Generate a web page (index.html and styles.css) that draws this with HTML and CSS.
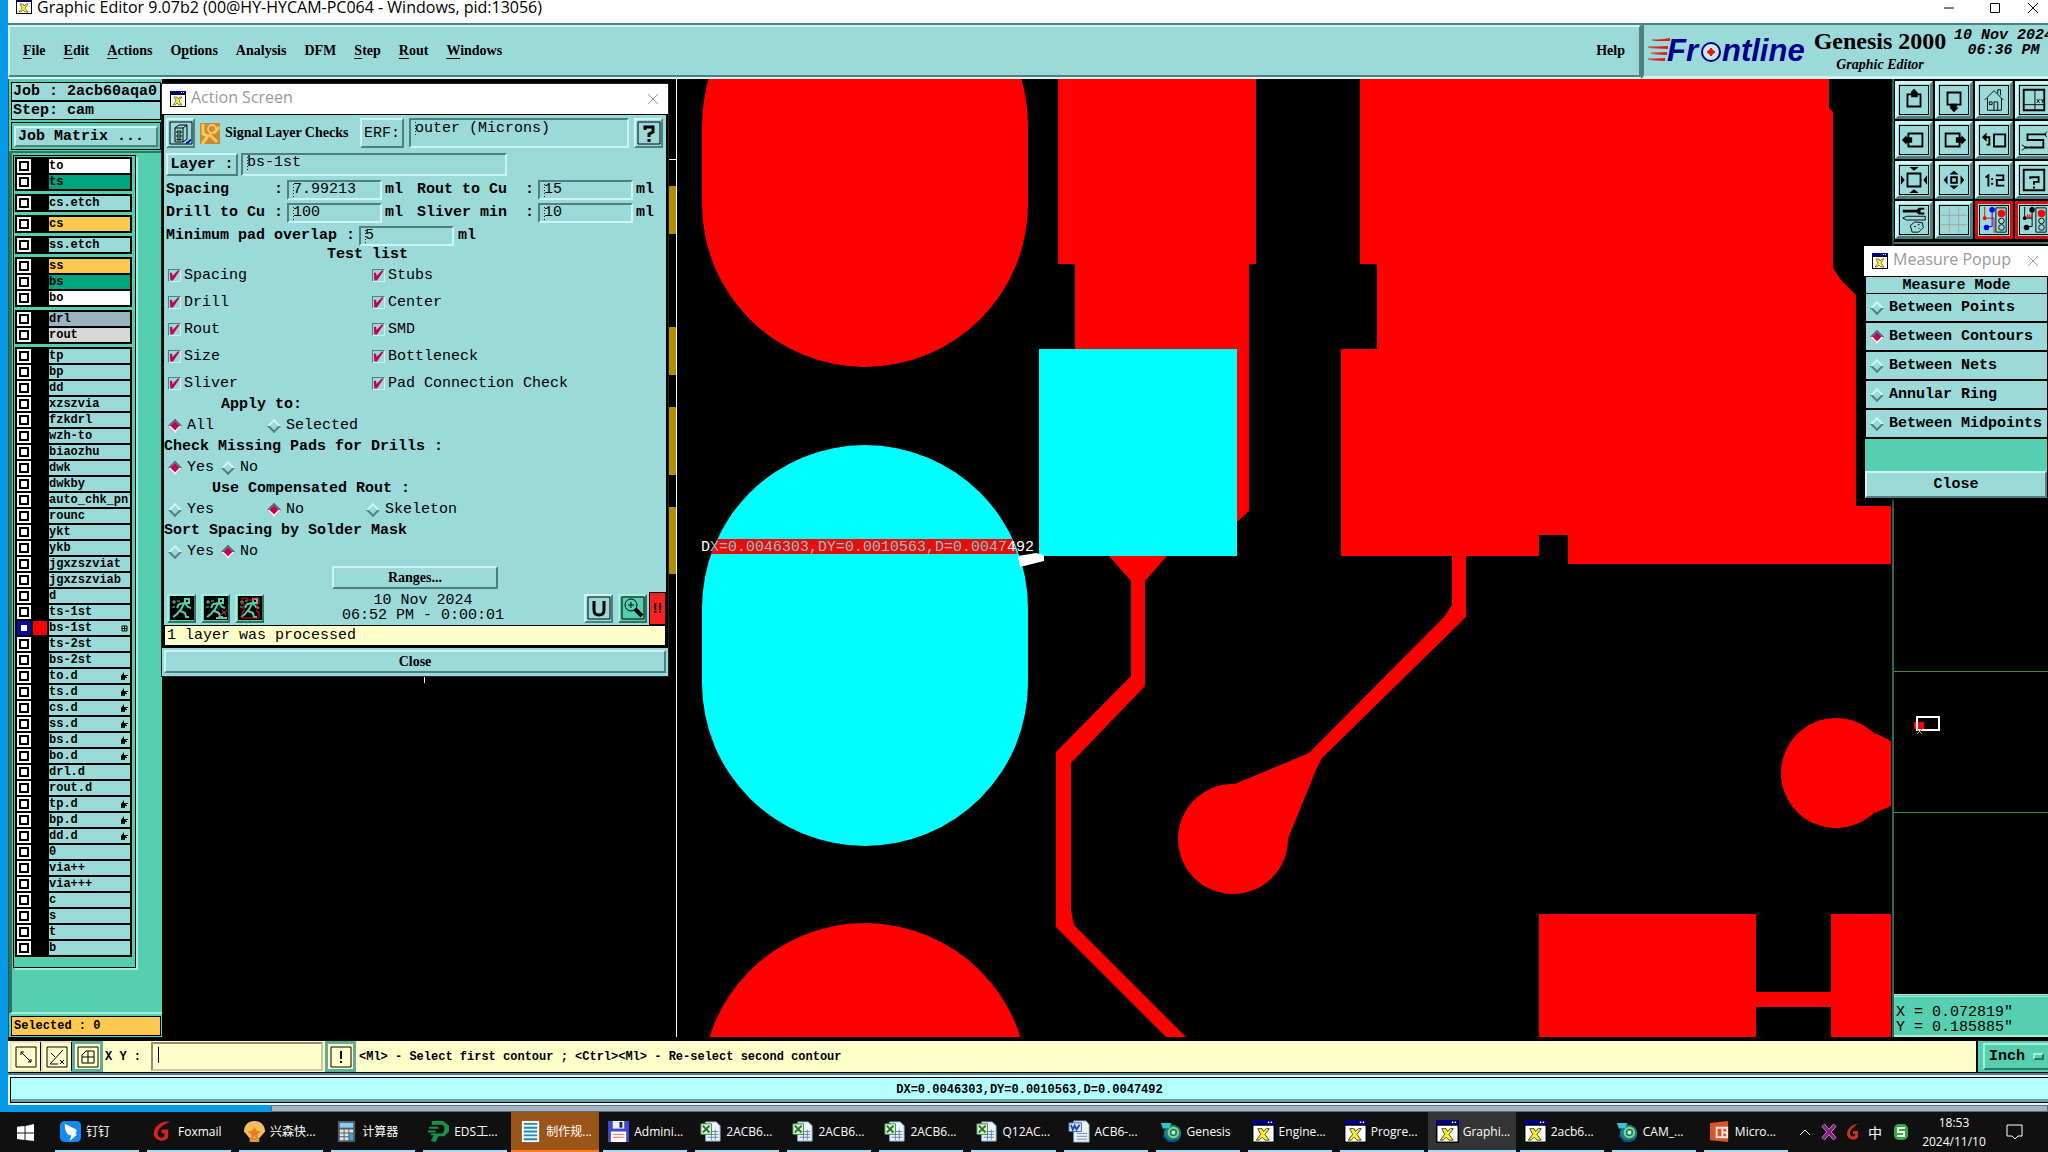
FILE: index.html
```
<!DOCTYPE html>
<html lang="en">
<head>
    <meta charset="utf-8">
    <title>Graphic Editor 9.07b2</title>
    <meta name="viewport" content="width=device-width, initial-scale=1.0">
    <link rel="stylesheet" href="styles.css">
</head>
<body>
    <!-- shared icons -->
    <svg class="defs" width="0" height="0">
        <symbol id="xwin" viewBox="0 0 16 16">
            <path d="M0 0h16v16H0z" fill="#000"/>
            <path d="M1 4h14v11H1z" fill="#fff"/>
            <path d="M0 0h16v3H0z" fill="#000080"/>
            <path d="M11 1h1v1h-1zM13 1h1v1h-1z" fill="#fff"/>
            <path d="M4 6h3l1 2 2-2h2L9 10l3 4H9l-2-2-2 2H3l3-4z" fill="#ffee22" stroke="#333" stroke-width=".6"/>
        </symbol>
        <symbol id="close" viewBox="0 0 12 12">
            <path d="M1 1l10 10M11 1L1 11" fill="none" stroke="currentColor"/>
        </symbol>
        <symbol id="excel" viewBox="0 0 24 24">
            <path d="M7 2h11l4 4v16H7z" fill="#eef4fb" stroke="#8fa9c8"/>
            <path d="M9 12h11M9 15h11M9 18h11M13 10v11M17 10v11" stroke="#5d86c0"/>
            <path d="M2 4h11v11H2z" fill="#e8f5e4" stroke="#3d8c3a"/>
            <path d="M4 6l7 7M11 6l-7 7" stroke="#1f7d28" stroke-width="2"/>
        </symbol>
        <symbol id="genesis" viewBox="0 0 24 24">
            <circle cx="13" cy="14" r="9" fill="#17808f"/>
            <path d="M1 3h11l-2 5-7 1z" fill="#35c0cc"/>
            <circle cx="14" cy="13" r="5" fill="none" stroke="#8edb6c" stroke-width="2"/>
            <circle cx="14" cy="13" r="2" fill="#ecf5a0"/>
            <path d="M3 16l6 6 10-1" fill="none" stroke="#0c4b80" stroke-width="2"/>
        </symbol>
        <symbol id="runner" viewBox="0 0 24 24">
            <path d="M0 0h24v24H0z" fill="#000"/>
            <path d="M15 3h4v4h-4zM9 8l6-1 3 4 3 1M14 8l-4 7 5 2 1 4h3M10 14l-3 4-4 3M9 8l-2 4" fill="none" stroke="#55cfb0" stroke-width="2"/>
            <path d="M2 6h4M4 4v4M7 5h3M2 11h3" stroke="#55cfb0"/>
        </symbol>
    </svg>

    <div class="window">
        <header class="titlebar">
            <svg class="winicon"><use href="#xwin"/></svg>
            <span class="wintitle">Graphic Editor 9.07b2 (00@HY-HYCAM-PC064 - Windows, pid:13056)</span>
            <button class="winbtn" aria-label="Minimize"><svg viewBox="0 0 12 12"><path d="M1 6h10" stroke="#000"/></svg></button>
            <button class="winbtn" aria-label="Maximize"><svg viewBox="0 0 12 12"><path d="M1.500 1.500h9v9h-9z" fill="none" stroke="#000"/></svg></button>
            <button class="winbtn" aria-label="Close"><svg><use href="#close"/></svg></button>
        </header>

        <div class="top">
            <nav class="menu">
                <a href="#"><u>F</u>ile</a>
                <a href="#"><u>E</u>dit</a>
                <a href="#"><u>A</u>ctions</a>
                <a href="#">O<u>p</u>tions</a>
                <a href="#">Analysis</a>
                <a href="#">DFM</a>
                <a href="#"><u>S</u>tep</a>
                <a href="#"><u>R</u>out</a>
                <a href="#"><u>W</u>indows</a>
                <a href="#" class="help">Help</a>
            </nav>
            <div class="brand">
                <svg class="logo" viewBox="0 0 162 34">
                    <path d="M4 7l18-3v3zM0 14l20-2v3zM3 20l16-2v3zM0 26l17-2v3z" fill="#e01818"/>
                    <path d="M4 6h16M0 13h18M3 19h14M0 25h14" stroke="#e01818"/>
                    <g class="logotext">
                        <text x="19" y="27">Fr</text>
                        <text x="74" y="27">ntline</text>
                    </g>
                    <circle cx="63" cy="18" r="9" fill="#c9ecec" stroke="#00008b" stroke-width="2"/>
                    <path d="M63 14v8M59 18h8" stroke="#e01818" stroke-width="2"/>
                    <circle cx="63" cy="18" r="3" fill="#e01818"/>
                </svg>
                <div class="product"><b>Genesis 2000</b><i>Graphic Editor</i></div>
                <div class="date"><span>10 Nov 2024</span><span>06:36 PM</span></div>
            </div>
        </div>

        <main class="main">
            <aside class="sidebar">
                <div class="jobbox">Job : 2acb60aqa0</div>
                <div class="jobbox">Step: cam</div>
                <div class="matrix"><button class="bevel">Job Matrix ...</button></div>
                <div class="layerarea">
                    <div id="layers" class="layers"></div>
                </div>
                <div class="selected">Selected : 0</div>
            </aside>

            <section class="canvas">
                <svg class="board" viewBox="162 79 1730 958" preserveAspectRatio="xMinYMin slice">
                    <!-- ruler -->
                    <g fill="#b08c00">
                        <path d="M660 186h16v48h-16zM660 327h16v48h-16zM660 407h16v68h-16zM660 507h16v67h-16z"/>
                    </g>
                    <path d="M676.500 79v958M660 159.500h16M424.500 670v13" stroke="#fff"/>
                    <g fill="#f00">
                        <rect x="702" y="-38" width="326" height="405" rx="163"/>
                        <rect x="702" y="923" width="326" height="405" rx="163"/>
                        <path d="M1058 79h198v185h-7v247l-12 11h-40V349h-122v-85h-17z"/>
                        <path d="M1360 79h469v29l4 4v156l8 12 15 15v211h35v58h-323v-29h-29v21h-198V349h36v-85h-17z"/>
                        <path d="M1109 556h58l-22 25v105l-74 77v147l3 15 112 112h-20L1056 927V752l75-76v-95z"/>
                        <path d="M1452 556h14v61l-144 141-6 12-28 69-48 0-5-55 74-31 135-136 8-12z"/>
                        <circle cx="1233" cy="839" r="55"/>
                        <circle cx="1836" cy="773" r="55"/>
                        <path d="M1875 733l16 8v65l-16 7z"/>
                        <path d="M1539 914h217v78h75v-78h60v123h-60v-30h-75v30h-217z"/>
                    </g>
                    <g fill="#0ff">
                        <rect x="702" y="445" width="326" height="401" rx="163"/>
                        <path d="M1039 349h198v207h-198z"/>
                    </g>
                    <path d="M717 539h295l5 15H711z" fill="#ee0b0b"/>
                    <path d="M1018 556l18-3 8 2v6l-24 6z" fill="#fff"/>
                    <text class="measure" x="701" y="551"><tspan class="out">D</tspan>X=0.0046303,DY=0.0010563,D=0.0047<tspan class="out">492</tspan></text>
                </svg>
            </section>

            <aside class="right">
                <div class="tools">
                    <button aria-label="Pan up"><svg viewBox="0 0 30 30"><path d="M8 9h14v13H8z" class="o"/><path d="M11 7l4-4 4 4v5h-7V7z"/></svg></button>
                    <button aria-label="Pan down"><svg viewBox="0 0 30 30"><path d="M8 7h14v13H8z" class="o"/><path d="M11 19h7v4h2l-5 5-5-5h1z"/></svg></button>
                    <button aria-label="Home"><svg viewBox="0 0 30 30"><path d="M5 15L15 5l10 10M8 13v13h15V13M15 26v-9h4v9M10 17h3v3h-3zM19 8V4h3v6" class="t"/></svg></button>
                    <button aria-label="Split view"><svg viewBox="0 0 30 30"><path d="M4 4h22v22H4z" class="o"/><path d="M16 4v22M4 20h22M18 14l3 4M21 14l-3 4M22 14l2 2 1-2M24 16v2" class="t"/></svg></button>
                    <button aria-label="Pan left"><svg viewBox="0 0 30 30"><path d="M9 8h15v14H9z" class="o"/><path d="M2 15l5-5v2h6v6H7v2z"/></svg></button>
                    <button aria-label="Pan right"><svg viewBox="0 0 30 30"><path d="M6 8h15v14H6z" class="o"/><path d="M28 15l-5-5v2h-6v6h6v2z"/></svg></button>
                    <button aria-label="Previous view"><svg viewBox="0 0 30 30"><path d="M15 9h12v13H15zM4 12h6v8H7" class="o"/><path d="M2 12l5-5v10z"/></svg></button>
                    <button aria-label="Serpentine"><svg viewBox="0 0 30 30"><path d="M28 9H8v6h17v8H5" class="o"/><path d="M2 20l4 3-4 3M29 6l-3 3 3 3" class="t"/></svg></button>
                    <button aria-label="Zoom in"><svg viewBox="0 0 30 30"><path d="M8 8h14v14H8z" class="o"/><path d="M10 1h10l-5 4zM10 29h10l-5-4zM1 10v10l4-5zM29 10v10l-4-5z"/></svg></button>
                    <button aria-label="Zoom out"><svg viewBox="0 0 30 30"><path d="M12 12h6v6h-6z" class="o"/><path d="M10 9l5-4 5 4zM10 21l5 4 5-4zM8 10v10l-4-5zM22 10v10l4-5z"/></svg></button>
                    <button aria-label="Scale 1:2"><svg viewBox="0 0 30 30"><path d="M6 12l3-2v12M13 13v2M13 18v2M17 10h8v5h-7v6h8" class="o"/></svg></button>
                    <button aria-label="Query"><svg viewBox="0 0 30 30"><path d="M4 4h22v22H4z" class="o"/><path d="M11 14v-2h9v5h-5v3M15 22v2" class="o"/></svg></button>
                    <button aria-label="Settings"><svg viewBox="0 0 30 30"><path d="M3 4h15l2-2h6v2h-4v3h4v2h-6l-2-2H3z"/><path d="M3 13l4-2h20v4H7zM11 21l5-4 8 1 1 5-5 5h-7zM15 22h2M19 20h2M20 24h1" class="t"/></svg></button>
                    <button aria-label="Grid"><svg viewBox="0 0 30 30"><path d="M10 1v28M20 1v28M1 10h28M1 20h28" stroke="#b79a9a" fill="none"/></svg></button>
                    <button class="hot" aria-label="Net check"><svg viewBox="0 0 30 30"><path d="M5 1v12h10v16" stroke="#f00" fill="none"/><path d="M13 4v18H7" stroke="#00f" fill="none"/><circle cx="5" cy="13" r="2" fill="#f00"/><circle cx="13" cy="4" r="3" fill="#00f"/><circle cx="7" cy="23" r="3" fill="#00f"/><path d="M17 2h11v26H17z" class="t"/><circle cx="23" cy="8" r="4" fill="#f00"/><circle cx="23" cy="16" r="3" class="t"/><circle cx="23" cy="23" r="3" class="t"/></svg></button>
                    <button class="hot" aria-label="Drill check"><svg viewBox="0 0 30 30"><path d="M5 1v12h8M13 4v18H7" class="t"/><path d="M7 12h6M8 9v3M10 9v3M12 9v3" stroke="#f00"/><circle cx="5" cy="13" r="2"/><circle cx="13" cy="4" r="3"/><circle cx="7" cy="23" r="3"/><path d="M17 2h11v26H17z" class="t"/><circle cx="23" cy="8" r="4" fill="#f00"/><circle cx="23" cy="16" r="3" class="t"/><circle cx="23" cy="23" r="3" class="t"/></svg></button>
                </div>
                <svg class="overview" viewBox="0 0 154 750" preserveAspectRatio="xMinYMin slice">
                    <path d="M0 427.500h160M0 568.500h160" stroke="#4c8a2c"/>
                    <path d="M20 478h10v7H20z" fill="#f00"/>
                    <path d="M23 473h22v13H23z" fill="none" stroke="#fff" stroke-width="2"/>
                    <path d="M23 485l5 5M28 485l-5 5" stroke="#aaa"/>
                </svg>
                <div class="coords">X = 0.072819"<br>Y = 0.185885"</div>
            </aside>

            <section class="dialog action">
                <div class="dlgtitle">
                    <svg class="winicon"><use href="#xwin"/></svg>
                    <span>Action Screen</span>
                    <button class="dlgclose" aria-label="Close window"><svg><use href="#close"/></svg></button>
                </div>
                <form class="dlgbody">
                    <div class="row head">
                        <button type="button" class="bevel sq" aria-label="Checklist"><svg viewBox="0 0 24 24"><path d="M1 1h22v22H1z" class="t"/><path d="M6 7l4-3h8v14l-4 3H6zM6 7h8v14M14 7l4-3M8 10h4v2H8zM8 14h4v2H8zM8 18h4v1H8z" class="t"/><path d="M17 22c3 0 3-3 5-3" fill="none" stroke="#00c" stroke-width="2"/></svg></button>
                        <svg class="checkicon" viewBox="0 0 20 21"><path d="M0 0h20v21H0z" fill="#c58a3d"/><circle cx="12" cy="6" r="4" fill="#c58a3d" stroke="#ffc850" stroke-width="2"/><path d="M3 1v10l5 2-6 8M9 11l8 8M14 10l5-6" stroke="#ffc850" stroke-width="3" fill="none"/></svg>
                        <b class="serif">Signal Layer Checks</b>
                        <button type="button" class="bevel erf">ERF:</button>
                        <input class="field grow" aria-label="ERF" value="outer (Microns)">
                        <button type="button" class="bevel sq" aria-label="Help on checks"><svg viewBox="0 0 24 24"><path d="M1 1h22v22H1z" class="t"/><path d="M8 9V6h8v5l-4 2v3M12 18v3" fill="none" stroke="#000" stroke-width="3"/></svg></button>
                    </div>
                    <div class="row layer">
                        <button type="button" class="bevel">Layer :</button>
                        <input class="field" aria-label="Layer" value="bs-1st">
                    </div>
                    <div class="params">
                        <label for="spacing">Spacing&nbsp;&nbsp;&nbsp;&nbsp;&nbsp;:</label><input id="spacing" class="field" value="7.99213"><span>ml</span>
                        <label for="rout">Rout to Cu&nbsp; :</label><input id="rout" class="field" value="15"><span>ml</span>
                        <label for="drill">Drill to Cu :</label><input id="drill" class="field" value="100"><span>ml</span>
                        <label for="sliver">Sliver min&nbsp; :</label><input id="sliver" class="field" value="10"><span>ml</span>
                    </div>
                    <div class="row overlap">
                        <label for="overlap">Minimum pad overlap :</label><input id="overlap" class="field" value="5"><span>ml</span>
                    </div>
                    <h3 class="testlist">Test list</h3>
                    <div class="tests">
                        <label><input type="checkbox" checked>Spacing</label>
                        <label><input type="checkbox" checked>Stubs</label>
                        <label><input type="checkbox" checked>Drill</label>
                        <label><input type="checkbox" checked>Center</label>
                        <label><input type="checkbox" checked>Rout</label>
                        <label><input type="checkbox" checked>SMD</label>
                        <label><input type="checkbox" checked>Size</label>
                        <label><input type="checkbox" checked>Bottleneck</label>
                        <label><input type="checkbox" checked>Sliver</label>
                        <label><input type="checkbox" checked>Pad Connection Check</label>
                    </div>
                    <h3 class="indent2">Apply to:</h3>
                    <div class="radios wide">
                        <label><input type="radio" name="apply" checked>All</label>
                        <label><input type="radio" name="apply">Selected</label>
                    </div>
                    <h3>Check Missing Pads for Drills :</h3>
                    <div class="radios">
                        <label><input type="radio" name="missing" checked>Yes</label>
                        <label><input type="radio" name="missing">No</label>
                    </div>
                    <h3 class="indent1">Use Compensated Rout :</h3>
                    <div class="radios wide">
                        <label><input type="radio" name="comp">Yes</label>
                        <label><input type="radio" name="comp" checked>No</label>
                        <label><input type="radio" name="comp">Skeleton</label>
                    </div>
                    <h3>Sort Spacing by Solder Mask</h3>
                    <div class="radios">
                        <label><input type="radio" name="sort">Yes</label>
                        <label><input type="radio" name="sort" checked>No</label>
                    </div>
                    <button type="button" class="bevel ranges serif">Ranges...</button>
                    <div class="runbar">
                        <button type="button" class="bevel green" aria-label="Run"><svg><use href="#runner"/></svg></button>
                        <button type="button" class="bevel green" aria-label="Run on area"><svg viewBox="0 0 24 24"><use href="#runner" width="24" height="24"/><path d="M12 22h11" stroke="#55cfb0" stroke-width="2"/><path d="M14 21l9-7M18 14l4 5" stroke="#e33"/></svg></button>
                        <button type="button" class="bevel green" aria-label="Run on profile"><svg viewBox="0 0 24 24"><use href="#runner" width="24" height="24"/><path d="M4 2h5v2h7V2h5v6h-2v8h2v6H4v-6h2V8H4z" fill="none" stroke="#e11"/></svg></button>
                        <div class="rundate">10 Nov 2024<br>06:52 PM - 0:00:01</div>
                        <button type="button" class="bevel" aria-label="Undo"><svg viewBox="0 0 24 24"><path d="M1 1h22v22H1z" class="t"/><path d="M7 5v9q0 5 5 5t5-5V5" fill="none" stroke="#000" stroke-width="3"/></svg></button>
                        <button type="button" class="bevel green" aria-label="View results"><svg viewBox="0 0 24 24"><path d="M1 1h22v22H1z" class="t"/><circle cx="10" cy="9" r="6" class="t"/><path d="M7 9h6M10 6v6" class="t"/><path d="M14 13l7 7" stroke="#000" stroke-width="4"/></svg></button>
                        <button type="button" class="alert">!!</button>
                    </div>
                    <div class="message">1 layer was processed</div>
                </form>
                <div class="dlgfoot"><button class="bevel serif">Close</button></div>
            </section>

            <section class="dialog popup">
                <div class="dlgtitle">
                    <svg class="winicon"><use href="#xwin"/></svg>
                    <span>Measure Popup</span>
                    <button class="dlgclose" aria-label="Close popup"><svg><use href="#close"/></svg></button>
                </div>
                <div class="modes">
                    <h3>Measure Mode</h3>
                    <label><input type="radio" name="mode">Between Points</label>
                    <label><input type="radio" name="mode" checked>Between Contours</label>
                    <label><input type="radio" name="mode">Between Nets</label>
                    <label><input type="radio" name="mode">Annular Ring</label>
                    <label><input type="radio" name="mode">Between Midpoints</label>
                </div>
                <div class="popfoot"><button class="bevel">Close</button></div>
            </section>
        </main>

        <div class="prompt">
            <button class="pbtn" aria-label="Snap"><svg viewBox="0 0 24 24"><path d="M2 2h20v20H2zM7 7l10 10M7 10V7h3M17 14v3h-3" class="t"/></svg></button>
            <button class="pbtn" aria-label="Angle"><svg viewBox="0 0 24 24"><path d="M2 2h20v20H2zM5 19L18 5M6 8l4 4M5 19h8M15 15l4 4M19 15l-4 4" class="t"/></svg></button>
            <button class="pbtn on" aria-label="Grid snap"><svg viewBox="0 0 24 24"><path d="M2 2h20v20H2zM6 18V10l4-4h8v12zM12 6v12M6 12h12" class="t"/></svg></button>
            <label for="xy">X Y :</label>
            <input id="xy" class="field">
            <button class="pbtn on" aria-label="Notes"><svg viewBox="0 0 24 24"><path d="M2 2h20v20H2z" class="t"/><path d="M12 6v8M12 16v2" class="o"/></svg></button>
            <span class="hint">&lt;Ml&gt; - Select first contour ; &lt;Ctrl&gt;&lt;Ml&gt; - Re-select second contour</span>
            <div class="units"><button class="bevel green">Inch <i></i></button></div>
        </div>
        <div class="status"><span>DX=0.0046303,DY=0.0010563,D=0.0047492</span></div>
    </div>
    <div class="behind"></div>

    <footer class="taskbar">
        <button class="start" aria-label="Start"><svg viewBox="0 0 18 18"><path d="M0 3l8-1v7H0zM9 2l9-2v9H9zM0 10h8v7l-8-1zM9 10h9v8l-9-1z" fill="#fff"/></svg></button>
        <div class="tasks">
            <button><svg viewBox="0 0 24 24"><rect x="1" y="1" width="22" height="22" rx="5" fill="#1789f5"/><path d="M6 4l12 6c1 1 0 3-1 5h2l-8 7 2-6h-2c-4-2-5-7-5-12z" fill="#fff"/></svg>钉钉</button>
            <button><svg viewBox="0 0 24 24"><path d="M20 2C10 0 2 8 3 15s12 9 15 3V10h-7v4h3v3c-3 3-7 1-7-3 0-5 6-10 13-12z" fill="#d4231f"/></svg>Foxmail</button>
            <button><svg viewBox="0 0 24 24"><path d="M12 1c7 0 11 5 11 11l-6 7H7l-6-7C1 6 5 1 12 1z" fill="#f4bd62"/><path d="M12 7l2 4 5 1-4 3 1 5-4-3-4 3 1-5-4-3 5-1z" fill="#ee7d1c"/><path d="M7 19h10v4H7z" fill="#e0973c"/></svg>兴森快...</button>
            <button><svg viewBox="0 0 24 24"><path d="M3 1h18v22H3z" fill="#555b63"/><path d="M5 3h14v5H5z" fill="#7fd0f7"/><path d="M5 10h4v3H5zM10 10h4v3h-4zM15 10h4v3h-4zM5 14h4v3H5zM10 14h4v3h-4zM5 18h4v3H5zM10 18h4v3h-4z" fill="#dfe5ea"/><path d="M15 14h4v7h-4z" fill="#3aa0e8"/></svg>计算器</button>
            <button><svg viewBox="0 0 24 24"><path d="M5 1h12l6 5v6l-5 5h-6l-3 6-5-1 4-8h8l2-3V7l-2-2H5z" fill="#159447"/><path d="M2 8h10M1 12h8M4 15h5" stroke="#159447" stroke-width="2"/></svg>EDS工...</button>
            <button class="flash"><svg viewBox="0 0 24 24"><path d="M3 1h18v22H3z" fill="#f5fafd"/><path d="M5 4h14M5 8h14M5 12h14M5 16h14M5 20h14" stroke="#1c8bbd" stroke-width="2"/></svg>制作规...</button>
            <button><svg viewBox="0 0 24 24"><path d="M1 1h22v22H1z" fill="#3d49c8"/><path d="M6 1h12v8H6z" fill="#eef"/><path d="M13 2h3v6h-3z" fill="#224"/><path d="M4 12h16v11H4z" fill="#fff"/><path d="M6 15h12M6 18h12" stroke="#e66"/></svg>Admini...</button>
            <button><svg><use href="#excel"/></svg>2ACB6...</button>
            <button><svg><use href="#excel"/></svg>2ACB6...</button>
            <button><svg><use href="#excel"/></svg>2ACB6...</button>
            <button><svg><use href="#excel"/></svg>Q12AC...</button>
            <button><svg viewBox="0 0 24 24"><path d="M6 1h13l3 4v18H6z" fill="#eef4fb" stroke="#8fa9c8"/><path d="M9 14h11M9 17h11M9 20h11" stroke="#5d86c0"/><path d="M1 3h13v9H1z" fill="#dbe7fa" stroke="#3b66b5"/><path d="M3 5l2 5 2-4 2 4 3-5" fill="none" stroke="#2450a8" stroke-width="2"/></svg>ACB6-...</button>
            <button><svg><use href="#genesis"/></svg>Genesis</button>
            <button><svg><use href="#xwin"/></svg>Engine...</button>
            <button><svg><use href="#xwin"/></svg>Progre...</button>
            <button class="current"><svg><use href="#xwin"/></svg>Graphi...</button>
            <button><svg><use href="#xwin"/></svg>2acb6...</button>
            <button><svg><use href="#genesis"/></svg>CAM_...</button>
            <button><svg viewBox="0 0 24 24"><path d="M2 3l19-2v22L2 21z" fill="#d9532c"/><path d="M8 7h13v12H8z" fill="#fbe9e2"/><path d="M10 9h4v8h-4zM16 9h3v3h-3zM16 14h3v3h-3z" fill="#d9532c"/></svg>Micro...</button>
        </div>
        <div class="tray">
            <svg viewBox="0 0 18 18"><path d="M4 12l5-5 5 5" fill="none" stroke="#fff"/></svg>
            <svg viewBox="0 0 18 18"><path d="M3 2l12 14M15 2L3 16" stroke="#ddd" stroke-width="4"/><path d="M3 2l12 14M15 2L3 16" stroke="#8a1a8a" stroke-width="3"/></svg>
            <svg viewBox="0 0 18 18"><path d="M14 1C8 1 3 6 3 11s8 8 11 3V8H9v3h2v2c-3 1-5 0-5-3 0-3 4-7 8-9z" fill="#d0311c"/></svg>
            <span class="ime">中</span>
            <svg viewBox="0 0 18 18"><rect x="2" y="1" width="14" height="16" rx="5" fill="#2fae3c"/><path d="M13 5H6v4h6v4H5" fill="none" stroke="#fff" stroke-width="2"/></svg>
        </div>
        <div class="clock">18:53<br>2024/11/10</div>
        <button class="notify" aria-label="Notifications"><svg viewBox="0 0 18 18"><path d="M1 2h15v11h-4l-3 3-3-3H1z" fill="none" stroke="#fff"/></svg></button>
    </footer>

    <script>
        const groups = [
            [['to', 'white'], ['ts', 'solder']],
            [['cs.etch', '']],
            [['cs', 'copper']],
            [['ss.etch', '']],
            [['ss', 'copper'], ['bs', 'solder'], ['bo', 'white']],
            [['drl', 'drill'], ['rout', 'rout']],
            ['tp', 'bp', 'dd', 'xzszvia', 'fzkdrl', 'wzh-to', 'biaozhu', 'dwk', 'dwkby',
             'auto_chk_pnl', 'rounc', 'ykt', 'ykb', 'jgxzszviat', 'jgxzszviab', 'd', 'ts-1st',
             'bs-1st', 'ts-2st', 'bs-2st', 'to.d', 'ts.d', 'cs.d', 'ss.d', 'bs.d', 'bo.d',
             'drl.d', 'rout.d', 'tp.d', 'bp.d', 'dd.d', '0', 'via++', 'via+++', 'c', 's', 't', 'b'
            ].map(name => [name, ''])
        ];
        const noHand = ['drl.d', 'rout.d'];
        const hand = '<svg class="mark" viewBox="0 0 8 8"><path d="M1 4l3-4v3h4v1H6v1h1v1H5v2H1z"/></svg>';
        const grid = '<svg class="mark" viewBox="0 0 8 8"><path d="M2 2h5v5H2zM4.500 2v5M2 4.500h5" fill="none" stroke="#000"/></svg>';

        document.getElementById('layers').innerHTML = groups.map(rows =>
            '<div class="group">' + rows.map(([name, kind]) => {
                let mark = '';
                if (name.endsWith('.d') && !noHand.includes(name)) mark = hand;
                if (name === 'bs-1st') mark = grid;
                const active = name === 'bs-1st';
                return `<label class="lrow ${active ? 'active' : ''}">
                    <input type="checkbox" ${active ? 'checked' : ''}>
                    <span class="swatch"></span>
                    <span class="lname ${kind}"><span>${name}</span>${mark}</span>
                </label>`;
            }).join('') + '</div>'
        ).join('');
    </script>
</body>
</html>
```

FILE: styles.css
```
* {
    box-sizing: border-box;
}
html, body {
    height: 100%;
}
body {
    margin: 0;
    display: flex;
    flex-direction: column;
    overflow: hidden;
    background: #0a9be8;
    color: #000;
    font-family: "Liberation Mono", "Noto Sans CJK SC", monospace;
    font-size: 15px;
}
button, input {
    font: inherit;
    color: inherit;
    margin: 0;
    padding: 0;
}
button {
    background: none;
    border: none;
    display: flex;
    align-items: center;
    justify-content: center;
}
h3 {
    margin: 0;
    font-size: 15px;
}
svg { display: block; }
.defs { position: absolute; }
.t {
    fill: none;
    stroke: #000;
}
.o {
    fill: none;
    stroke: #000;
    stroke-width: 2;
}
.serif {
    font-family: "Liberation Serif", serif;
    font-size: 14px;
    font-weight: bold;
}
.bevel {
    background: #9cdada;
    border: 2px solid;
    border-color: #cdf5f5 #4d8080 #4d8080 #cdf5f5;
}
.green {
    background: #55cfb0;
    border-color: #a5f0da #2d7560 #2d7560 #a5f0da;
}
.field {
    min-width: 0;
    border: 2px solid;
    border-color: #4d8080 #cdf5f5 #cdf5f5 #4d8080;
    border-radius: 0;
    outline: none;
    padding-left: 4px;
    background: repeating-linear-gradient(#222 0 1px, transparent 1px 3px) 4px 2px / 1px 14px no-repeat #9cdada;
}

/* main window */
.window {
    flex: 1;
    min-height: 0;
    margin-left: 8px;
    display: flex;
    flex-direction: column;
    background: #000;
}
.titlebar {
    height: 23px;
    display: flex;
    align-items: flex-start;
    padding-left: 8px;
    background: #fff;
    font-family: "Open Sans", sans-serif;
}
.winicon {
    width: 16px;
    height: 16px;
}
.wintitle {
    flex: 1;
    padding-left: 5px;
    font-size: 16px;
    line-height: 15px;
}
.titlebar .winicon { margin-top: -2px; }
.winbtn {
    width: 46px;
    height: 15px;
}
.winbtn:last-child { width: 30px; }
.winbtn svg {
    width: 12px;
    height: 12px;
}
.top {
    height: 56px;
    display: flex;
    background: #9cdada;
    border-top: 2px solid #4d8080;
}
.menu {
    flex: 1;
    display: flex;
    align-items: center;
    gap: 18px;
    padding: 0 14px 1px 13px;
    border: 2px solid;
    border-color: #cdf5f5 #4d8080 #4d8080 #cdf5f5;
    box-shadow: 0 2px #d8f4f4;
    margin-bottom: 2px;
}
.menu a {
    color: #000;
    text-decoration: none;
    font: bold 14px "Liberation Serif", serif;
}
.menu u { text-underline-offset: 3px; }
.menu .help { margin-left: auto; }
.brand {
    width: 407px;
    display: flex;
    overflow: hidden;
    border-left: 3px solid #4d8080;
    border-bottom: 3px solid #cdf5f5;
    padding-left: 4px;
}
.logo {
    flex: none;
    width: 162px;
    height: 34px;
    margin-top: 9px;
}
.logotext {
    font: italic bold 31px "Liberation Sans", sans-serif;
    fill: #00008b;
}
.product {
    flex: none;
    width: 140px;
    display: flex;
    flex-direction: column;
    align-items: center;
    font-family: "Liberation Serif", serif;
}
.product b {
    font-size: 24px;
    line-height: 32px;
}
.product i {
    font-size: 14px;
    font-weight: bold;
    line-height: 16px;
}
.date {
    flex: none;
    display: flex;
    flex-direction: column;
    align-items: center;
    margin-left: 4px;
    padding-top: 3px;
    font-style: italic;
    font-weight: bold;
    line-height: 15px;
}
.main {
    flex: 1;
    min-height: 0;
    display: flex;
    position: relative;
    margin-bottom: 4px;
}

/* layers */
.sidebar {
    width: 154px;
    display: flex;
    flex-direction: column;
    background: #55cfb0;
    border-left: 1px solid #20584a;
    padding-top: 3px;
    font-weight: bold;
}
.jobbox {
    height: 19px;
    margin: 0 1px 0 2px;
    padding-left: 1px;
    line-height: 17px;
    border: 1px solid #000;
    background: #9cdada;
    overflow: hidden;
    white-space: nowrap;
}
.matrix {
    height: 28px;
    margin: 2px 1px 0 2px;
    padding: 3px 2px 2px;
    border: 1px solid #000;
}
.matrix .bevel {
    width: 100%;
    height: 100%;
    justify-content: flex-start;
    padding-left: 2px;
    font-weight: bold;
}
.layerarea {
    flex: 1;
    margin-top: 1px;
    padding: 2px 0 0 1px;
    border-top: 2px solid #2d7560;
    border-left: 3px solid #2d7560;
    border-bottom: 2px solid #a5f0da;
}
.layers {
    width: 123px;
    padding: 1px 3px 7px 1px;
    border: 1px solid #000;
    box-shadow: 2px 2px #a5f0da;
}
.group {
    display: flex;
    flex-direction: column;
    gap: 2px;
    padding: 2px;
    margin-bottom: 3px;
    background: #000;
}
.lrow {
    display: flex;
    gap: 2px;
    height: 14px;
}
.lrow input {
    appearance: none;
    flex: none;
    width: 14px;
    height: 14px;
    border: 2px solid #fff;
    background: #fff;
    box-shadow: inset 0 0 0 2px #000;
}
.lrow.active input {
    border-color: #0a0a9a;
    box-shadow: inset 0 0 0 2px #0a0a9a;
}
.swatch {
    flex: none;
    width: 14px;
}
.active .swatch { background: #f00; }
.lname {
    flex: 1;
    min-width: 0;
    display: flex;
    align-items: center;
    justify-content: space-between;
    background: #9cdada;
    font-size: 12px;
    line-height: 14px;
    overflow: hidden;
}
.white { background: #fff; }
.solder { background: #00a47c; }
.copper { background: #ffc850; }
.drill { background: #9ab3be; }
.rout { background: #d8d8d8; }
.mark {
    flex: none;
    width: 8px;
    height: 8px;
    margin-right: 2px;
}
.selected {
    height: 20px;
    margin: 2px 1px 1px 2px;
    padding-left: 2px;
    border: 1px solid #000;
    background: #ffc850;
    font-size: 12px;
    line-height: 18px;
}

/* board */
.canvas {
    flex: 1;
    min-width: 0;
    background: #000;
    overflow: hidden;
}
.board {
    width: 100%;
    height: 100%;
}
.measure {
    font: 15px "Liberation Mono", monospace;
    fill: #7fc4c4;
}
.measure .out { fill: #fff; }

/* right column */
.right {
    width: 156px;
    display: flex;
    flex-direction: column;
    overflow: hidden;
    border-left: 2px solid #2d6558;
}
.tools {
    display: grid;
    grid-template-columns: repeat(4, 38px);
    gap: 2px;
    padding: 2px 0 3px 1px;
    border-bottom: 2px solid #55a090;
}
.tools button {
    width: 38px;
    height: 38px;
    background: #9cdada;
    border: 3px solid;
    border-color: #cdf5f5 #4d8080 #4d8080 #cdf5f5;
}
.tools svg {
    width: 30px;
    height: 30px;
    border: 1px solid #000;
}
.tools .hot { border-color: #d81010; }
.overview {
    flex: 1;
    min-height: 0;
    width: 100%;
}
.coords {
    height: 43px;
    padding: 8px 2px 0;
    line-height: 15px;
    background: #55cfb0;
    border-top: 3px double #a5f0da;
    border-bottom: 2px solid #a5f0da;
}

/* floating windows */
.dialog {
    position: absolute;
    background: #000;
}
.dlgtitle {
    height: 30px;
    display: flex;
    align-items: center;
    padding-left: 8px;
    background: #fff;
    color: #999;
    font-family: "Open Sans", sans-serif;
    font-size: 16px;
    line-height: 26px;
}
.dlgtitle span {
    flex: 1;
    height: 30px;
    padding-left: 5px;
    white-space: nowrap;
}
.dlgclose {
    width: 30px;
    height: 30px;
}
.dlgclose svg {
    width: 12px;
    height: 12px;
}
.action {
    left: 154px;
    top: 5px;
    width: 506px;
    box-shadow: 0 0 0 1px #222;
}
.dlgbody {
    margin: 1px 2px 0;
    padding-top: 1px;
    background: #9cdada;
}
.row {
    display: flex;
    align-items: center;
    padding-left: 2px;
}
.head {
    height: 34px;
    padding: 0 3px 0 2px;
    gap: 5px;
}
.sq {
    width: 29px;
    height: 30px;
}
.sq svg, .runbar svg {
    width: 24px;
    height: 24px;
}
.checkicon {
    width: 20px;
    height: 21px;
}
.head .serif { width: 130px; white-space: nowrap; }
.erf {
    width: 44px;
    height: 30px;
}
.grow {
    flex: 1;
    height: 30px;
    padding-bottom: 9px;
}
.layer {
    height: 28px;
    gap: 3px;
}
.layer .bevel {
    width: 72px;
    height: 23px;
    font-weight: bold;
}
.layer .field {
    width: 266px;
    height: 23px;
    padding-bottom: 4px;
}
.params {
    display: grid;
    grid-template-columns: 121px 95px 35px 121px 95px 30px;
    grid-auto-rows: 23px;
    align-items: center;
    padding-left: 2px;
}
.params label, .params span, .overlap {
    font-weight: bold;
    white-space: nowrap;
}
.params span { padding-left: 3px; }
.params .field, .overlap .field {
    width: 95px;
    height: 20px;
    font-weight: normal;
}
.overlap {
    height: 23px;
    gap: 4px;
}
.testlist {
    height: 15px;
    line-height: 15px;
    padding-left: 163px;
}
.tests {
    display: grid;
    grid-template-columns: 204px 1fr;
    grid-auto-rows: 27px;
    height: 132px;
    padding-left: 4px;
}
.tests label, .radios label, .modes label {
    display: flex;
    align-items: center;
    white-space: nowrap;
}
.tests input {
    appearance: none;
    width: 13px;
    height: 13px;
    margin-right: 3px;
    border: 1px solid;
    border-color: #4d8080 #cdf5f5 #cdf5f5 #4d8080;
}
.tests input:checked::after {
    content: "";
    display: block;
    width: 11px;
    height: 11px;
    background: #c4004f;
    clip-path: polygon(8% 25%, 28% 25%, 32% 55%, 80% 5%, 98% 5%, 36% 96%, 12% 96%);
}
.dlgbody h3:not(.testlist) {
    height: 21px;
    line-height: 21px;
}
.dlgbody .indent1 { padding-left: 48px; }
.dlgbody .indent2 { padding-left: 57px; }
.radios {
    display: flex;
    gap: 9px;
    height: 21px;
    padding-left: 6px;
}
.wide label { width: 90px; }
input[type="radio"] {
    appearance: none;
    flex: none;
    width: 10px;
    height: 10px;
    margin-right: 7px;
    border: 2px solid;
    border-color: #cdf5f5 #4d8080 #4d8080 #cdf5f5;
    transform: rotate(45deg);
}
input[type="radio"]:checked {
    background: #c4004f;
    border-color: #5d7080 #e8f4f4 #e8f4f4 #5d7080;
}
.ranges {
    width: 166px;
    height: 23px;
    margin: 4px auto 2px;
}
.runbar {
    height: 34px;
    display: flex;
    align-items: center;
    gap: 5px;
    padding-left: 3px;
}
.runbar .bevel {
    width: 29px;
    height: 29px;
}
.rundate {
    flex: 1;
    text-align: center;
    line-height: 15px;
    padding-right: 2px;
}
.runbar .alert {
    width: 17px;
    height: 33px;
    margin-left: -3px;
    background: #ff2020;
    border: 1px solid #000;
    font: bold 14px "Liberation Sans", sans-serif;
}
.message {
    height: 21px;
    padding-left: 2px;
    line-height: 20px;
    background: #ffffcc;
    border: 1px solid #000;
}
.dlgfoot {
    margin-top: 2px;
    padding: 2px 2px 3px;
    background: #9cdada;
}
.dlgfoot .bevel {
    width: 100%;
    height: 23px;
}
.popup {
    right: 0;
    top: 167px;
    width: 184px;
    box-shadow: 0 0 10px #000;
    font-weight: bold;
}
.popup .dlgtitle { font-weight: normal; }
.modes {
    display: flex;
    flex-direction: column;
    gap: 2px;
    padding: 1px 1px 1px 2px;
}
.modes h3 {
    height: 16px;
    line-height: 17px;
    text-align: center;
    background: #9cdada;
    margin-bottom: -1px;
}
.modes label {
    height: 27px;
    padding-left: 6px;
    background: #9cdada;
}
.popfoot {
    padding-top: 32px;
    background: #55cfb0;
    border: 1px solid #000;
}
.popfoot .bevel {
    width: 100%;
    height: 27px;
    font-weight: bold;
}

/* prompt and status lines */
.prompt {
    height: 31px;
    display: flex;
    align-items: center;
    padding-left: 2px;
    background: #ffffcc;
    font-size: 12px;
    font-weight: bold;
}
.pbtn {
    width: 31px;
    height: 31px;
    border: 2px solid #e5e5b5;
    border-right: 1px solid #000;
}
.pbtn.on { border: 3px solid #5fae98; }
.pbtn svg {
    width: 24px;
    height: 24px;
}
.prompt label {
    width: 48px;
    padding-left: 2px;
}
.prompt .field {
    width: 172px;
    height: 29px;
    margin-right: 2px;
    border-color: #8f8f70 #c8c8a0 #c8c8a0 #8f8f70;
    background: linear-gradient(#000, #000) 5px 3px / 1px 16px no-repeat #ffffcc;
}
.hint {
    flex: 1;
    padding-left: 3px;
    white-space: nowrap;
}
.units {
    width: 72px;
    height: 31px;
    padding: 2px 0 2px 5px;
    border-left: 2px solid #000;
    background: #55cfb0;
}
.units .bevel {
    width: 100%;
    height: 27px;
    gap: 8px;
    border-right: none;
    font-size: 15px;
}
.units i {
    width: 11px;
    height: 7px;
    border: 2px solid;
    border-color: #a5f0da #2d7560 #2d7560 #a5f0da;
}
.status {
    height: 32px;
    margin-top: 1px;
    padding: 2px 0 2px 2px;
    background: #d5ffff;
    border-top: 2px solid #4d8080;
    border-bottom: 2px solid #d5ffff;
}
.status span {
    display: block;
    height: 26px;
    line-height: 24px;
    text-align: center;
    background: #b3ffff;
    border: 1px solid #000;
    border-right: none;
    box-shadow: inset 0 -3px #6f9f9f;
    font-size: 12px;
    font-weight: bold;
}
.behind {
    height: 7px;
    margin-left: 271px;
    background: #a4b2c4;
    border: 1px solid #5d6b7a;
}

/* taskbar */
.taskbar {
    height: 40px;
    display: flex;
    align-items: center;
    background: #101010;
    color: #fff;
    font: 12px "Open Sans", "Noto Sans CJK SC", sans-serif;
}
.start {
    width: 51px;
    height: 40px;
}
.start svg {
    width: 17px;
    height: 17px;
}
.tasks {
    flex: 1;
    height: 40px;
    display: flex;
}
.tasks button {
    flex: 1;
    min-width: 0;
    margin: 0 4px;
    padding-left: 4px;
    justify-content: flex-start;
    gap: 4px;
    border-bottom: 2px solid #a8d8f8;
    white-space: nowrap;
}
.tasks svg {
    flex: none;
    width: 23px;
    height: 23px;
}
.tasks .flash, .tasks .current {
    margin: 0;
    flex-basis: 8px;
    padding-left: 8px;
}
.tasks .flash {
    background: #9c5518;
    border-color: #ff7b1c;
}
.tasks .current { background: #343434; }
.tray {
    display: flex;
    align-items: center;
    gap: 6px;
    padding-left: 4px;
}
.tray svg {
    width: 18px;
    height: 18px;
}
.ime {
    width: 18px;
    font-size: 14px;
}
.clock {
    width: 88px;
    text-align: center;
    line-height: 19px;
}
.notify {
    width: 50px;
    height: 40px;
    padding-right: 24px;
    justify-content: flex-end;
}
.notify svg {
    width: 18px;
    height: 18px;
}
```
